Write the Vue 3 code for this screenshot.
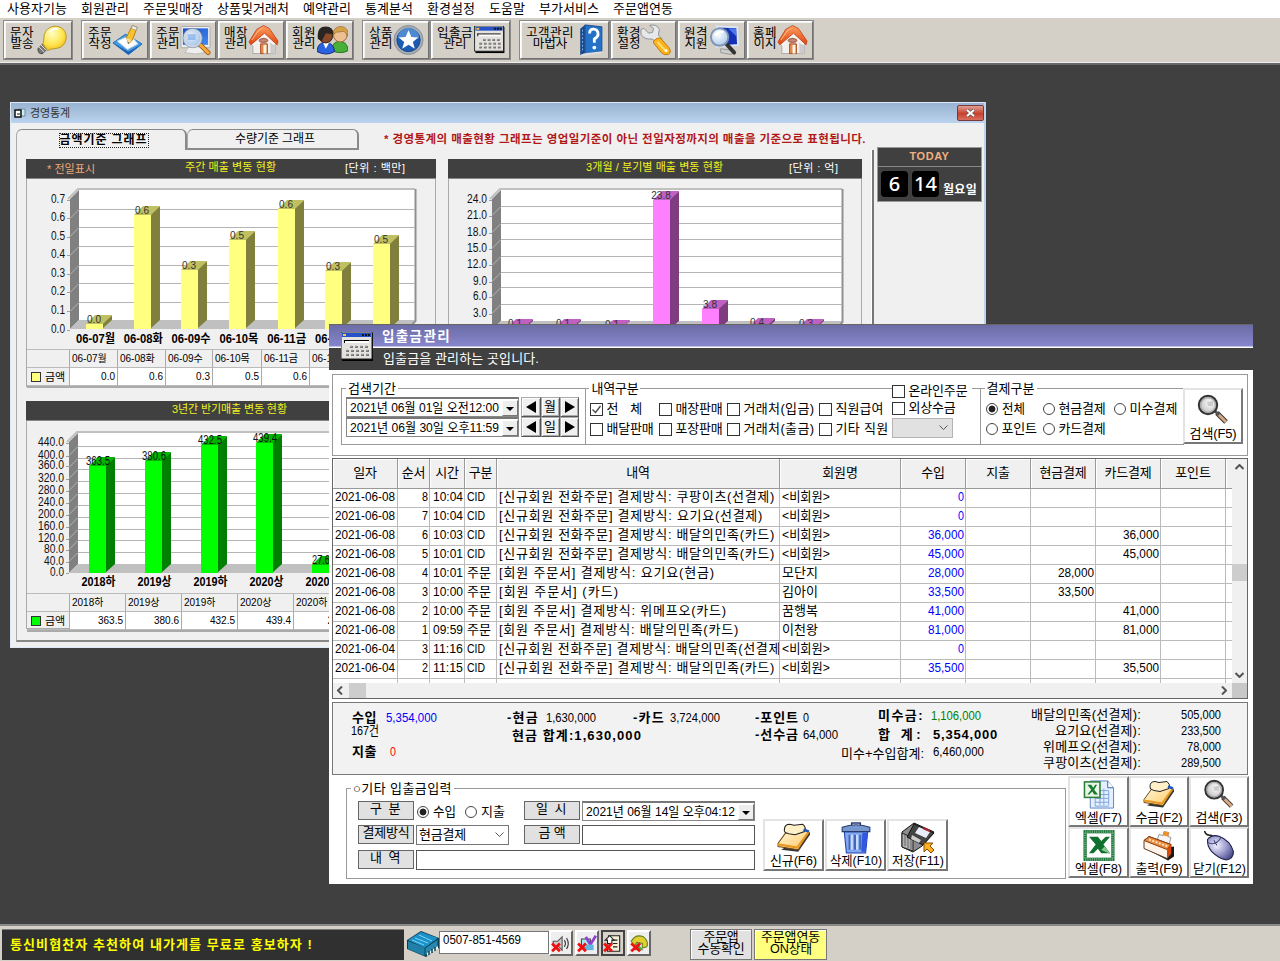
<script setup>
const gridWidth = (s) => [...s].reduce((n, c) => n + (c.charCodeAt(0) > 255 ? 12 : 6), 0)

// Fits a line of text to a width (half/full-width cells by default):
// condensed when it is too long, tracked out when it is too short.
const vFit = {
  mounted(el, { value }) {
    const text = el.textContent
    const target = value || gridWidth(text)
    const natural = el.getBoundingClientRect().width
    if (target / natural < 0.97) {
      el.style.transformOrigin = '0 50%'
      el.style.transform = `scaleX(${target / natural})`
      el.style.marginRight = target - natural + 'px'
    } else {
      el.style.letterSpacing = (target - natural) / [...text].length + 'px'
    }
  }
}

const menus = [
  ['사용자기능', 60], ['회원관리', 48], ['주문및매장', 60], ['상품및거래처', 72], ['예약관리', 48],
  ['통계분석', 48], ['환경설정', 48], ['도움말', 36], ['부가서비스', 60], ['주문앱연동', 60]
]

const toolGroups = [
  [{ a: '문자', b: '발송', w: 70, i: 'bulb' }],
  [
    { a: '주문', b: '작성', w: 68, i: 'note' }, { a: '주문', b: '관리', w: 68, i: 'monitor' },
    { a: '매장', b: '관리', w: 68, i: 'house' }, { a: '회원', b: '관리', w: 69, i: 'people' }
  ],
  [{ a: '상품', b: '관리', w: 68, i: 'star' }, { a: '입출금', b: '관리', w: 81, i: 'calc' }],
  [
    { a: '고객관리', b: '마법사', w: 91, i: 'book' }, { a: '환경', b: '설정', w: 67, i: 'wrench' },
    { a: '원격', b: '지원', w: 69, i: 'remote' }, { a: '홈페', b: '이지', w: 68, i: 'house' }
  ]
]

const charts = [
  {
    id: 'week', title: '주간 매출 변동 현황', tw: 91, tx: 159, unit: '[단위 : 백만]', uw: 60, ux: 319, note: '* 전일표시',
    x: 26, y: 180, w: 410, h: 170, left: 70, right: 415, top: 191, floor: 321, labelX: 65,
    front: '#ffff80', side: '#80803c', cap: '#c0c060', bottom: 330,
    lines: [210, 228, 247, 266, 284, 303],
    ticks: [['0.7', 200], ['0.6', 218], ['0.5', 237], ['0.4', 255], ['0.3', 274], ['0.2', 292], ['0.1', 311], ['0.0', 330]],
    bars: [[86, 325, '0.0'], [134, 216, '0.6'], [181, 271, '0.3'], [229, 241, '0.5'], [278, 210, '0.6'], [325, 272, '0.3'], [373, 245, '0.5']],
    names: ['06-07월', '06-08화', '06-09수', '06-10목', '06-11금', '06-12토'], nw: 39, step: 47.8, ny: 344,
    cols: '43px 48px 48px 47px 49px 48px 48px 1fr', values: ['0.0', '0.6', '0.3', '0.5', '0.6', '0.3'], small: true
  },
  {
    id: 'quarter', title: '3개월 / 분기별 매출 변동 현황', tw: 137, tx: 138, unit: '[단위 : 억]', uw: 49, ux: 341, note: '',
    x: 448, y: 180, w: 414, h: 170, left: 492, right: 842, top: 191, floor: 322, labelX: 487,
    front: '#ff80ff', side: '#803c80', cap: '#c060c0', bottom: 331,
    lines: [207, 224, 240, 257, 273, 288, 305],
    ticks: [['24.0', 200], ['21.0', 216], ['18.0', 233], ['15.0', 249], ['12.0', 265], ['9.0', 282], ['6.0', 297], ['3.0', 314]],
    bars: [[507, 329, '0.1'], [555, 329, '0.1'], [604, 330, '0.1'], [653, 201, '23.8'], [702, 310, '3.8'], [749, 328, '0.4'], [798, 329, '0.3']],
    names: [], values: [], small: true
  },
  {
    id: 'half', title: '3년간 반기매출 변동 현황', tw: 115, tx: 146, unit: '', note: '',
    x: 26, y: 420, w: 410, h: 172, left: 69, right: 415, top: 432, floor: 563, labelX: 64,
    front: '#00ff00', side: '#008000', cap: '#00b400', bottom: 572,
    lines: [445, 457, 468, 480, 492, 504, 516, 528, 539, 551],
    ticks: [['440.0', 441], ['400.0', 454], ['360.0', 464], ['320.0', 477], ['280.0', 489], ['240.0', 501], ['200.0', 513], ['160.0', 525], ['120.0', 537], ['80.0', 548], ['40.0', 560], ['0.0', 571]],
    bars: [[89, 465, '363.5'], [145, 460, '380.6'], [201, 444, '432.5'], [256, 442, '439.4'], [312, 564, '27.6']],
    names: ['2018하', '2019상', '2019하', '2020상', '2020하'], nw: 34, step: 56, ny: 585,
    cols: '43px 56px 56px 56px 56px 56px 1fr', values: ['363.5', '380.6', '432.5', '439.4', '27.6'], small: false
  }
]

const methods = [
  [['전   체', true, 36], ['매장판매', false, 47], ['거래처(입금)', false, 71], ['직원급여', false, 48]],
  [['배달판매', false, 47], ['포장판매', false, 47], ['거래처(출금)', false, 71], ['기타 직원', false, 53]]
]

const heads = ['일자', '순서', '시간', '구분', '내역', '회원명', '수입', '지출', '현금결제', '카드결제', '포인트', '']
const order = '[신규회원 전화주문] 결제방식: '
const rows = [
  ['2021-06-08', '8', '10:04', 'CID', order + '쿠팡이츠(선결제)', '<비회원>', '0', '', '', '', '', ''],
  ['2021-06-08', '7', '10:04', 'CID', order + '요기요(선결제)', '<비회원>', '0', '', '', '', '', ''],
  ['2021-06-08', '6', '10:03', 'CID', order + '배달의민족(카드)', '<비회원>', '36,000', '', '', '36,000', '', ''],
  ['2021-06-08', '5', '10:01', 'CID', order + '배달의민족(카드)', '<비회원>', '45,000', '', '', '45,000', '', ''],
  ['2021-06-08', '4', '10:01', '주문', '[회원 주문서] 결제방식: 요기요(현금)', '모단지', '28,000', '', '28,000', '', '', ''],
  ['2021-06-08', '3', '10:00', '주문', '[회원 주문서] (카드)', '김아이', '33,500', '', '33,500', '', '', ''],
  ['2021-06-08', '2', '10:00', '주문', '[회원 주문서] 결제방식: 위메프오(카드)', '꿈행복', '41,000', '', '', '41,000', '', ''],
  ['2021-06-08', '1', '09:59', '주문', '[회원 주문서] 결제방식: 배달의민족(카드)', '이천왕', '81,000', '', '', '81,000', '', ''],
  ['2021-06-04', '3', '11:16', 'CID', order + '배달의민족(선결제', '<비회원>', '0', '', '', '', '', ''],
  ['2021-06-04', '2', '11:15', 'CID', order + '배달의민족(카드)', '<비회원>', '35,500', '', '', '35,500', '', ''],
  ['', '', '', '', '', '', '', '', '', '', '', '']
]

const apps = [
  ['배달의민족(선결제):', '505,000'], ['요기요(선결제):', '233,500'],
  ['위메프오(선결제):', '78,000'], ['쿠팡이츠(선결제):', '289,500']
]

const entryButtons = [['신규(F6)', 'pad', 47], ['삭제(F10)', 'trash', 52], ['저장(F11)', 'save', 52]]
const mainButtons = [
  ['엑셀(F7)', 'sheet', 47], ['수금(F2)', 'pad', 47], ['검색(F3)', 'lens', 47],
  ['엑셀(F8)', 'excel', 47], ['출력(F9)', 'printer', 47], ['닫기(F12)', 'mouse', 53]
]
const trayIcons = ['sound', 'screen', 'memo', 'phone']
</script>

<template>
  <div class="app">
    <svg class="defs" width="0" height="0">
      <defs>
        <radialGradient id="gBulb" cx=".4" cy=".3" r=".8"><stop offset="0" stop-color="#ffffc0" /><stop offset=".6" stop-color="#ffe34a" /><stop offset="1" stop-color="#e8a810" /></radialGradient>
        <linearGradient id="gRoof" x1="0" y1="0" x2="0" y2="1"><stop offset="0" stop-color="#ffa060" /><stop offset="1" stop-color="#e04410" /></linearGradient>
        <linearGradient id="gScreen" x1="0" y1="0" x2="1" y2="1"><stop offset="0" stop-color="#1a4cc8" /><stop offset="1" stop-color="#3f8cf0" /></linearGradient>
        <radialGradient id="gLens" cx=".4" cy=".35" r=".7"><stop offset="0" stop-color="#fff" /><stop offset="1" stop-color="#a8c8e8" /></radialGradient>
        <radialGradient id="gGrey" cx=".6" cy=".4" r=".7"><stop offset="0" stop-color="#fff" /><stop offset="1" stop-color="#b4b4b8" /></radialGradient>
        <linearGradient id="gPad" x1="0" y1="0" x2="1" y2="1"><stop offset="0" stop-color="#fff8dc" /><stop offset="1" stop-color="#ffc660" /></linearGradient>
        <radialGradient id="gMouse" cx=".35" cy=".4" r=".8"><stop offset="0" stop-color="#f4f4ff" /><stop offset=".5" stop-color="#9898cc" /><stop offset="1" stop-color="#383878" /></radialGradient>
      </defs>
      <symbol id="bulb" viewBox="0 0 32 32">
        <path d="M2 25l5-5 5 5-5 5q-5 1-5-5z" fill="#777" stroke="#444" /><path d="M3 23l6 6M5 21l6 6" stroke="#ddd" />
        <path d="M7 20C9 16 7 12 10 7 14 1 23 0 28 5s4 14-2 18c-5 3-10 1-14 4z" fill="url(#gBulb)" stroke="#b89828" />
        <path d="M14 8q4-5 9-3" stroke="#fff" stroke-width="2" fill="none" />
      </symbol>
      <symbol id="note" viewBox="0 0 32 32">
        <path d="M1 19L14 10l17 10-14 11z" fill="#3d9be4" stroke="#176fc0" /><path d="M1 19l16 9 14-8-14 11z" fill="#1f5fb0" />
        <path d="M5 17l14-6 8 9-11 6z" fill="#fff" stroke="#a4bed8" /><path d="M17 20L15 13 21 1l5 2-5 13z" fill="#f6c32c" stroke="#ba7c12" />
        <path d="M21 1l5 2-1 3-5-2z" fill="#eee" stroke="#888" stroke-width=".6" /><path d="M15 14l5 2-3 4z" fill="#ffe0a0" /><path d="M16 18l1.500.6V20z" fill="#222" />
      </symbol>
      <symbol id="monitor" viewBox="0 0 32 32">
        <rect x="1" y="2" width="30" height="22" rx="1" fill="#eee" stroke="#aaa" /><rect x="3" y="4" width="26" height="17" fill="url(#gScreen)" />
        <path d="M9 23h13l4 6q-10 3-21 0z" fill="#eee" stroke="#bbb" /><path d="M21 21l8 8" stroke="#9a5818" stroke-width="5" stroke-linecap="round" /><path d="M21 21l8 8" stroke="#f5a83c" stroke-width="3.200" stroke-linecap="round" />
        <circle cx="13" cy="14" r="9" fill="url(#gLens)" fill-opacity=".9" stroke="#cfd6de" stroke-width="2" /><circle cx="13" cy="14" r="10" fill="none" stroke="#7790b0" stroke-width=".7" /><path d="M8 10h8v6H8z" fill="#5b96e0" opacity=".5" />
      </symbol>
      <symbol id="house" viewBox="0 0 32 32">
        <path d="M5 15h23v15H5z" fill="#f1efee" stroke="#aaa" /><path d="M23 15h5v15h-5z" fill="#ccc" /><path d="M3 20L16 8l13 12-3 1-10-8L6 22z" fill="#f8f4f0" />
        <path d="M1 18L9 5 16 1 22 4 31 17l-1 4L17 9 3 21z" fill="url(#gRoof)" stroke="#bc3c10" stroke-width=".8" /><path d="M4 16L11 6l4-2" stroke="#ffc090" fill="none" />
        <path d="M13 20h7v10h-7z" fill="#e88a4c" stroke="#a84c20" /><path d="M16 21h3v9h-3z" fill="#fff4e4" /><ellipse cx="16" cy="16.500" rx="4.500" ry="2" fill="#c88870" stroke="#985040" />
      </symbol>
      <symbol id="people" viewBox="0 0 32 32">
        <path d="M15 27q0-9 9-10 8 2 8 10-7 4-17 0z" fill="#48b038" stroke="#20701c" /><circle cx="24" cy="11" r="7" fill="#edc094" stroke="#9b6830" /><path d="M16 11q1-9 9-9 8 1 7 10l-4-5-8 1z" fill="#d6a048" stroke="#8a6020" stroke-width=".6" />
        <path d="M0 28q0-9 9-10 9 2 9 10-8 5-18 0z" fill="#2a62e0" stroke="#153080" /><path d="M6 18l3 7 4-7z" fill="#fff" /><circle cx="9" cy="12" r="7" fill="#8a4a28" stroke="#351c10" /><path d="M1 15Q-1 2 9 2q8 0 8 8l-8-1-4 8z" fill="#2a2422" />
      </symbol>
      <symbol id="star" viewBox="0 0 32 32">
        <circle cx="16" cy="16" r="15" fill="#a7acb2" stroke="#8a8f96" /><circle cx="16" cy="16" r="12" fill="#1c5cb4" stroke="#174888" /><path d="M5 14a11 11 0 0 1 22 0q-11 4-22 0z" fill="#70a8e4" opacity=".6" />
        <path d="M16 6l3 7 7 .5-5.500 4.500 2 7-6.500-4-6.500 4 2-7L6 13.500l7-.5z" fill="#fff" />
      </symbol>
      <symbol id="calc" viewBox="0 0 32 30">
        <path d="M1 1h31v28H1z" fill="#000" /><path d="M0 0h31v27H0z" fill="#e4e2de" stroke="#222" /><path d="M1 1h29v4H1z" fill="#2552c8" /><path d="M2 2h3v2H2z" fill="#ffc830" /><path d="M21 2h2v2h-2zM24 2h2v2h-2zM27 2h2v2h-2z" fill="#111" />
        <path d="M3 8h25v3H3z" fill="#fff" /><path d="M3 8.500h25M3.500 8v3" stroke="#000" />
        <path d="M9 15h20M5 19h24M5 23h24" stroke="#777" stroke-width="2" stroke-dasharray="3 2" /><path d="M9 14h20M5 18h24M5 22h24" stroke="#bbb" stroke-dasharray="2 3" />
      </symbol>
      <symbol id="book" viewBox="0 0 26 34">
        <path d="M1 5l5-4v30l-5 2z" fill="#1a4888" /><path d="M6 1l18 2v26L6 32z" fill="#2472c8" stroke="#174a90" /><path d="M1 33l5-2 18-2v2L5 34z" fill="#ddd" /><path d="M3.500 6v22" stroke="#8ac0f0" stroke-dasharray="2 2" />
        <path d="M11 10q0-5 4.500-4.500T20 11q0 3-4 5v4" stroke="#fff" stroke-width="3" fill="none" /><circle cx="16" cy="25" r="2" fill="#fff" />
      </symbol>
      <symbol id="wrench" viewBox="0 0 32 32">
        <path d="M1 5l3-1 5 5 4-1 1-4-4-3q7-2 10 4l-1 6 4 4-5 5-5-5q-9 1-12-5z" fill="#e6e8ea" stroke="#8c9094" /><path d="M14 17q4-4 7-3l9 10q3 5-1 7-4 1-7-2l-8-10z" fill="#fbb41c" stroke="#c07808" /><path d="M18 18l9 10" stroke="#ffe078" stroke-width="2" /><circle cx="27" cy="27" r="1.500" fill="#fff" />
      </symbol>
      <symbol id="remote" viewBox="0 0 32 32">
        <path d="M8 2l21 1 1 18-22 2z" fill="#1430b4" stroke="#dce6f4" stroke-width="2" /><path d="M20 4h8v8z" fill="#4c78ea" /><path d="M12 25l14 2-3 4-11-2z" fill="#ccc" stroke="#999" />
        <path d="M17 19l9 10" stroke="#333" stroke-width="4" stroke-linecap="round" /><circle cx="11" cy="13" r="9" fill="url(#gLens)" stroke="#7e94b4" stroke-width="2" /><path d="M6 11q4-5 9-3" stroke="#fff" stroke-width="2" fill="none" />
      </symbol>
      <symbol id="lens" viewBox="0 0 32 32">
        <path d="M20 19l9 9" stroke="#333" stroke-width="5" /><path d="M21 20l8 8" stroke="#d8a880" stroke-width="3" /><path d="M18 17l4 4" stroke="#555" stroke-width="3" />
        <circle cx="11" cy="11" r="9" fill="url(#gGrey)" stroke="#333" stroke-width="2.400" /><circle cx="11" cy="11" r="7.500" fill="none" stroke="#aaa" stroke-width="1.500" /><path d="M10 8l6-1v5h-5z" fill="#ccc" />
      </symbol>
      <symbol id="pad" viewBox="0 0 32 30">
        <path d="M4 26l16 2L31 12v-3z" fill="#333" /><path d="M1 20L9 9l20-1 1 2-10 16-19-3z" fill="url(#gPad)" stroke="#6b4a18" /><path d="M1 21l18 3L30 9" stroke="#e89820" stroke-width="2" fill="none" />
        <path d="M7 7q0-5 5-5l4 1 8-1q4 3 2 7l-9 3-6-1q-5-1-4-4z" fill="#fff0c8" stroke="#222" /><path d="M25 7l5 2" stroke="#2058c0" stroke-width="2.500" />
      </symbol>
      <symbol id="trash" viewBox="0 0 28 30">
        <path d="M3 9h22l-2 20H5z" fill="#82a8f4" stroke="#1c40a8" /><path d="M20 10h5l-2 18h-4z" fill="#3058e4" /><path d="M8 12v14M13 12v14M18 12v14" stroke="#4468b8" stroke-width="2" /><path d="M10 12v14M15 12v14" stroke="#c8dcff" stroke-width="2" />
        <path d="M1 5q13-5 26 0v4H1z" fill="#7898d0" stroke="#283c70" /><path d="M10 3V1h8v2" fill="none" stroke="#283c70" stroke-width="1.500" />
      </symbol>
      <symbol id="save" viewBox="0 0 34 32">
        <path d="M1 10L13 1l20 9-12 14-9 6-11-5z" fill="#8c8c90" stroke="#111" /><path d="M1 11l11 5v13L1 25z" fill="#b0b0b2" stroke="#222" /><path d="M4 13v11M7 14v12M10 16v11" stroke="#666" />
        <path d="M13 2l20 9-11 12-16-8z" fill="#444" stroke="#111" /><path d="M18 5l11 5-4 6-11-5z" fill="#e8edf8" /><path d="M22 6l7 3" stroke="#b02030" stroke-width="2" /><path d="M11 13l9 5-2 3-8-4z" fill="#ccc" />
        <path d="M23 30v-9h9l-3 3 4 4-3 3-4-4z" fill="#ffb020" stroke="#8c4800" />
      </symbol>
      <symbol id="sheet" viewBox="0 0 32 32">
        <path d="M7 2h18l6 7v21H7z" fill="#e4f0ff" stroke="#5f86c4" /><path d="M25 2v7h6" fill="#fff" stroke="#3c62a8" /><path d="M17 12h9M17 16h9M12 20h14M12 24h14M17 10v17M21 10v17M26 12v15M12 20v8h14" stroke="#7ea4dc" fill="none" />
        <rect x="1" y="3" width="16" height="16" fill="#eaf5e8" stroke="#2e7d38" stroke-width="1.600" /><path d="M4 6h4l2 3 2-3h2l-3 5 4 5h-4l-2-3-3 3H4l4-5z" fill="#187c30" />
      </symbol>
      <symbol id="excel" viewBox="0 0 28 28">
        <rect x="1.500" y="1.500" width="25" height="25" fill="#fff" stroke="#187838" stroke-width="3" /><rect x="1.500" y="1.500" width="25" height="25" fill="none" stroke="#70a880" stroke-width="3" stroke-dasharray="1 1" />
        <path d="M5 6h8l3 4 4-4h4l-6 7 6 8h-8l-3-4-4 4H5l6-8z" fill="#107030" /><path d="M16 18l7 3h1l-5-6z" fill="#88c890" />
      </symbol>
      <symbol id="printer" viewBox="0 0 32 30">
        <path d="M6 20l19 10 6-4V16z" fill="#181818" /><path d="M14 10l2-6 4 1 1-4 5 1-1 4 3 1-2 7z" fill="#f4f4f4" stroke="#999" /><path d="M21 1l5 1-1 4-5-1z" fill="#f09020" /><path d="M1 10l5-4 22 8v9l-4 5L1 18z" fill="#fff2e8" stroke="#58402c" />
        <path d="M1 10l5-4 22 8-4 5z" fill="#e88c40" stroke="#903c10" /><path d="M6 9l19 7" stroke="#ffe0c0" stroke-width="2" stroke-dasharray="2 1.500" /><path d="M24 19l4-5v9l-4 5z" fill="#d84808" />
      </symbol>
      <symbol id="mouse" viewBox="0 0 30 30">
        <path d="M1 1q1 4 5 4t4 5" stroke="#222" stroke-width="1.500" fill="none" /><path d="M4 9q4-5 11-3 11 4 14 15 0 7-7 8-7-1-14-8-5-6-4-12z" fill="url(#gMouse)" stroke="#1c1c48" /><path d="M4 12q8 4 13-5M10 10l3 5" stroke="#44447c" fill="none" />
      </symbol>
      <symbol id="hall" viewBox="0 0 32 26">
        <path d="M0 9L14 0l18 7v10L19 26 0 18z" fill="#103848" /><path d="M1 9L14 1l17 6-13 10z" fill="#1c90c8" /><path d="M5 9l12 5M8 7l13 5M12 4l13 6" stroke="#7cd8f8" /><path d="M1 10l17 7v8L1 18z" fill="#2080a8" /><path d="M18 17l13-9v8l-13 9z" fill="#2888b0" stroke="#104050" /><path d="M20 22l11-7v3l-11 7z" fill="#e8f4f8" /><path d="M22 20v4M25 18v4M28 16v4" stroke="#104050" stroke-width="1.500" />
      </symbol>
      <symbol id="sound" viewBox="0 0 18 18"><path d="M2 7h4l4-4v12l-4-4H2z" fill="#ccc" stroke="#555" /><path d="M12 6q2 3 0 6M14 4q3 5 0 10" stroke="#333" fill="none" /><path d="M1 9l7 7M8 9l-7 7" stroke="#f01010" stroke-width="2.500" /></symbol>
      <symbol id="screen" viewBox="0 0 18 18"><path d="M4 5h8v8H4z" fill="#a8e4f0" stroke="#444" /><path d="M8 3l4 7 5-8" stroke="#9040d0" stroke-width="2.500" fill="none" /><path d="M8 10h7v5H8z" fill="#60b8e0" /><path d="M1 9l7 7M8 9l-7 7" stroke="#f01010" stroke-width="2.500" /></symbol>
      <symbol id="memo" viewBox="0 0 18 18"><path d="M5 2h10v14H4z" fill="#f6f0d8" stroke="#222" /><path d="M8 6h5M9 9h4M9 12h4" stroke="#222" /><path d="M2 6l4-4 4 4H8v3H4V6z" fill="#fff" stroke="#222" /><path d="M1 9l7 7M8 9l-7 7" stroke="#f01010" stroke-width="2.500" /></symbol>
      <symbol id="phone" viewBox="0 0 18 18"><path d="M2 7q4-7 11-4 5 4 3 9l-4 1v-4L7 8l-2 3z" fill="#e0d030" stroke="#688020" /><path d="M7 8l6 7H5z" fill="#50a840" /><path d="M2 9l8 7M10 9l-8 7" stroke="#f01010" stroke-width="2.500" /></symbol>
    </svg>

    <nav class="menu"><span v-for="m in menus" :key="m[0]" v-fit="m[1]">{{ m[0] }}</span></nav>

    <div class="toolbar">
      <div v-for="(g, gi) in toolGroups" :key="gi" class="tool-group">
        <button v-for="t in g" :key="t.a + t.b" class="tool" :style="{ width: t.w + 'px' }">
          <span class="two"><span v-fit="t.a.length * 12">{{ t.a }}</span><span v-fit="t.b.length * 11.500">{{ t.b }}</span></span>
          <svg :class="['tool-icon', t.i]"><use :href="'#' + t.i" /></svg>
        </button>
      </div>
    </div>

    <main class="desk">
      <section class="win stats">
        <header class="stats-bar">
          <svg width="13" height="11" viewBox="0 0 13 11"><path d="M4 1h7v7H4z" fill="#c8f0f4" stroke="#789" /><path d="M1 2h6v7H1z" fill="#fff" stroke="#111" stroke-width="1.500" /><path d="M3 6h3" stroke="#111" /></svg>
          <span v-fit="40">경영통계</span>
          <button class="close"><svg width="9" height="8" viewBox="0 0 9 8"><path d="M1 1l7 6M8 1L1 7" stroke="#555" stroke-width="3.200" /><path d="M1 1l7 6M8 1L1 7" stroke="#fff" stroke-width="2" /></svg></button>
        </header>
        <div class="stats-body">
          <div class="stats-main">
            <div class="tabs">
              <div class="tab on"><b v-fit="88">금액기준 그래프</b></div>
              <div class="tab"><span v-fit="80">수량기준 그래프</span></div>
              <b v-fit="482" class="notice">* 경영통계의 매출현황 그래프는 영업일기준이 아닌 전일자정까지의 매출을 기준으로 표현됩니다.</b>
            </div>
            <div class="panel">
              <article v-for="c in charts" :key="c.id" class="chart">
                <header class="chart-head">
                  <svg width="100%" height="19">
                    <text v-if="c.note" x="21" y="14" textLength="48" class="note">{{ c.note }}</text>
                    <text :x="c.tx" y="12" :textLength="c.tw" class="ttl">{{ c.title }}</text>
                    <text v-if="c.unit" :x="c.ux" y="13" :textLength="c.uw" class="unit">{{ c.unit }}</text>
                  </svg>
                </header>
                <svg class="plot" :width="c.w - 2" :height="c.h" :viewBox="`${c.x + 1} ${c.y} ${c.w - 2} ${c.h}`">
                  <path :d="`M${c.left} ${c.top + 9}l9-9V${c.floor}l-9 9z`" fill="#808080" />
                  <path :d="`M${c.left + 9} ${c.top}H${c.right}V${c.floor}H${c.left + 9}z`" fill="#fff" />
                  <path :d="`M${c.left - 2} ${c.top + 9}l10-10H${c.right}`" stroke="#c0c0c0" stroke-width="2" fill="none" />
                  <path :d="`M${c.left} ${c.floor + 9}l9-9H${c.right}l-9 9z`" fill="#c0c0c0" />
                  <path :d="`M${c.right + .5} ${c.top - 1}V${c.floor + 1}l-9 9`" stroke="#909090" stroke-width="2" fill="none" />
                  <path v-for="l in c.lines" :key="l" :d="`M${c.left} ${l + 9.500}l9-9H${c.right}`" stroke="#b4b4b4" fill="none" />
                  <path v-for="t in c.ticks" :key="t[0]" :d="`M${c.left - 3} ${t[1] + 1.500}h3`" stroke="#a0a0a0" />
                  <text v-for="t in c.ticks" :key="'t' + t[0]" :x="c.labelX" :y="t[1] + 4" text-anchor="end" class="tick" :textLength="t[0].length * 6 - 4" lengthAdjust="spacingAndGlyphs">{{ t[0] }}</text>
                  <g v-for="(b, bi) in c.bars" :key="bi">
                    <path :d="`M${b[0] + 16} ${b[1]}l10-9V${c.floor}l-10 9z`" :fill="c.side" />
                    <path :d="`M${b[0]} ${b[1]}l9-9h17l-9 9z`" :fill="c.cap" />
                    <rect :x="b[0]" :y="b[1]" width="17" :height="c.bottom - b[1]" :fill="c.front" />
                    <text :x="b[0] + (c.small ? 8 : 9)" :y="b[1] - 1" text-anchor="middle" :class="c.small ? 'val' : 'val big'" :textLength="c.small ? null : b[2].length * 6 - 6" lengthAdjust="spacingAndGlyphs">{{ b[2] }}</text>
                  </g>
                  <text v-for="(n, ni) in c.names" :key="n" :x="c.left + 25.500 + c.step * ni + (c.small ? 0 : 4)" :y="c.ny" text-anchor="middle" class="name" :textLength="c.nw" lengthAdjust="spacingAndGlyphs">{{ n }}</text>
                </svg>
                <div v-if="c.names.length" class="data" :style="{ gridTemplateColumns: c.cols }">
                  <span></span><span v-for="n in c.names" :key="n" class="dn">{{ n }}</span><span></span>
                  <span class="key"><i :style="{ background: c.front }"></i>금액</span><span v-for="(v, vi) in c.values" :key="vi" class="dv">{{ v }}</span><span class="dv"></span>
                </div>
              </article>
            </div>
          </div>
          <aside class="today">
            <div class="today-head"><span v-fit="40">TODAY</span></div>
            <div class="today-date"><span class="num">6</span><span class="num">14</span><b v-fit="34">월요일</b></div>
          </aside>
        </div>
      </section>

      <section class="win cash">
        <header class="cash-bar">
          <svg class="cash-icon" width="32" height="30"><use href="#calc" /></svg>
          <h1><span v-fit="69">입출금관리</span></h1>
          <p><span v-fit="156">입출금을 관리하는 곳입니다.</span></p>
        </header>

        <div class="filter">
          <fieldset class="f-date">
            <legend><span v-fit="48">검색기간</span></legend>
            <div class="date-row">
              <div class="date"><span v-fit="149">2021년 06월 01일 오전12:00</span><i class="drop"></i></div>
              <button class="sq"><i class="tri left"></i></button><button class="sq">월</button><button class="sq"><i class="tri right"></i></button>
            </div>
            <div class="date-row">
              <div class="date"><span v-fit="149">2021년 06월 30일 오후11:59</span><i class="drop"></i></div>
              <button class="sq"><i class="tri left"></i></button><button class="sq">일</button><button class="sq"><i class="tri right"></i></button>
            </div>
          </fieldset>
          <fieldset class="f-kind">
            <legend><span v-fit="47">내역구분</span></legend>
            <div class="kind-row">
              <div class="kinds">
                <template v-for="(r, ri) in methods" :key="ri">
                  <label v-for="m in r" :key="m[0]"><i class="box"><svg v-if="m[1]" width="11" height="11"><path d="M1.500 5.500l3 3 5-6.500" stroke="#444" stroke-width="1.300" fill="none" /></svg></i><span v-fit="m[2]">{{ m[0] }}</span></label>
                </template>
              </div>
              <div class="extra">
                <label><i class="box"></i><span v-fit="59">온라인주문</span></label>
                <label><i class="box"></i><span v-fit="47">외상수금</span></label>
                <div class="combo off"><svg width="9" height="6"><path d="M.5.5l4 4 4-4" stroke="#555" fill="none" /></svg></div>
              </div>
            </div>
          </fieldset>
          <fieldset class="f-pay">
            <legend><span v-fit="48">결제구분</span></legend>
            <div class="pays">
              <label><i class="radio on"></i><span v-fit="23">전체</span></label>
              <label><i class="radio"></i><span v-fit="47">현금결제</span></label>
              <label><i class="radio"></i><span v-fit="48">미수결제</span></label>
              <label><i class="radio"></i><span v-fit="35">포인트</span></label>
              <label><i class="radio"></i><span v-fit="47">카드결제</span></label>
            </div>
          </fieldset>
          <button class="push find"><svg width="32" height="32"><use href="#lens" /></svg><span v-fit="47">검색(F5)</span></button>
        </div>

        <div class="sheet">
          <div class="sheet-view">
            <div class="row head"><span v-for="(h, i) in heads" :key="i">{{ h }}</span></div>
            <div v-for="(r, ri) in rows" :key="ri" class="row">
              <span v-for="(v, i) in r" :key="i" :class="'c' + i"><em v-if="v" v-fit>{{ v }}</em></span>
            </div>
          </div>
          <div class="vscroll"><svg width="9" height="6"><path d="M.5 5l4-4 4 4" /></svg><i></i><svg width="9" height="6"><path d="M.5 1l4 4 4-4" /></svg></div>
          <div class="hscroll"><svg width="6" height="9"><path d="M5 .5l-4 4 4 4" /></svg><i></i><svg width="6" height="9"><path d="M1 .5l4 4-4 4" /></svg></div>
          <div class="corner"></div>
        </div>

        <div class="sum">
          <div class="s1">
            <div class="ln"><b v-fit="25">수입</b><span v-fit="51" class="blue">5,354,000</span></div>
            <div class="ln l2"><span v-fit="28">167건</span></div>
            <div class="ln l3"><b v-fit="25">지출</b><span v-fit="6" class="red">0</span></div>
          </div>
          <div class="s2">
            <div class="ln"><b v-fit="32">-현금</b><span v-fit="50">1,630,000</span></div>
            <div class="ln tot"><b v-fit="130">현금 합계:1,630,000</b></div>
          </div>
          <div class="s3"><div class="ln"><b v-fit="32">-카드</b><span v-fit="50">3,724,000</span></div></div>
          <div class="s4">
            <div class="ln"><b v-fit="44">-포인트</b><span v-fit="6">0</span></div>
            <div class="ln"><b v-fit="44">-선수금</b><span v-fit="35">64,000</span></div>
          </div>
          <div class="s5">
            <div class="ln"><div class="lab"><b v-fit="46">미수금:</b></div><span v-fit="50" class="green">1,106,000</span></div>
            <div class="ln"><div class="lab"><b v-fit="46">합   계:</b></div><b v-fit="65" class="grand">5,354,000</b></div>
            <div class="ln"><div class="lab"><span v-fit="83">미수+수입합계:</span></div><span v-fit="51" class="last">6,460,000</span></div>
          </div>
          <div class="s6"><div v-for="a in apps" :key="a[0]" class="ln"><span v-fit="a[0].length * 12 - 22">{{ a[0] }}</span><div class="amount"><span v-fit="a[1].length * 6 - 2">{{ a[1] }}</span></div></div></div>
        </div>

        <div class="entry">
          <fieldset class="form">
            <legend><span v-fit="99">○기타 입출금입력</span></legend>
            <div class="form-in">
              <div class="fields">
                <div class="cap"><span v-fit="32">구  분</span></div>
                <div class="radios"><label><i class="radio on"></i><span v-fit="23">수입</span></label><label><i class="radio"></i><span v-fit="24">지출</span></label></div>
                <div class="cap"><span v-fit="32">일  시</span></div>
                <div class="date"><span v-fit="149">2021년 06월 14일 오후04:12</span><i class="drop"></i></div>
                <div class="cap"><span v-fit="47">결제방식</span></div>
                <div class="combo"><span v-fit="47">현금결제</span><svg width="9" height="6"><path d="M.5.5l4 4 4-4" stroke="#555" fill="none" /></svg></div>
                <div class="cap"><span v-fit="27">금 액</span></div>
                <div class="field"></div>
                <div class="cap"><span v-fit="32">내  역</span></div>
                <div class="field wide"></div>
              </div>
              <div class="entry-buttons"><button v-for="b in entryButtons" :key="b[0]" class="push"><svg width="34" height="32"><use :href="'#' + b[1]" /></svg><span v-fit="b[2]">{{ b[0] }}</span></button></div>
            </div>
          </fieldset>
          <div class="actions"><button v-for="b in mainButtons" :key="b[0]" class="push"><svg width="32" height="31"><use :href="'#' + b[1]" /></svg><span v-fit="b[2]">{{ b[0] }}</span></button></div>
        </div>
      </section>
    </main>

    <footer class="status">
      <div class="ad"><b v-fit="303">통신비협찬자 추천하여 내가게를 무료로 홍보하자 !</b></div>
      <svg class="hall" width="32" height="26"><use href="#hall" /></svg>
      <div class="tel"><span v-fit="78">0507-851-4569</span></div>
      <div class="tray"><button v-for="t in trayIcons" :key="t"><svg width="20" height="21"><use :href="'#' + t" /></svg></button></div>
      <button class="link"><span v-fit="35">주문앱</span><span v-fit="47">수동확인</span></button>
      <button class="link lit"><span v-fit="59">주문앱연동</span><span v-fit="42">ON상태</span></button>
    </footer>
  </div>
</template>

<style>
body { background: #404040; overflow: hidden; }
</style>

<style scoped>
* { box-sizing: border-box; }
.app {
  display: flex; flex-direction: column; width: 1280px; height: 961px; overflow: hidden;
  background: #404040; color: #000; line-height: 14px; white-space: pre;
  font-family: "Liberation Sans", "Noto Sans CJK KR", sans-serif; font-size: 13px;
}
.app span, .app b, .app em { display: inline-block; font-style: normal; flex: none; }
.defs { position: absolute; }
button { font: inherit; color: inherit; margin: 0; padding: 0; border: 0; line-height: 12px; white-space: pre; }
i { flex: none; display: block; }

.menu { display: flex; gap: 14px; height: 18px; padding: 1px 7px; background: #fff; line-height: 16px; }
.toolbar { display: flex; gap: 8px; height: 47px; padding: 2px 3px; background: #d4d0c8; border-bottom: 2px solid #666; box-shadow: inset 0 -1px #eee; }
.tool-group { display: flex; }
.tool { display: flex; align-items: center; justify-content: space-between; height: 40px; padding: 0 4px 0 5px; background: #d4d0c8; border: 2px solid; border-color: #fff #707070 #707070 #fff; outline: 1px solid #8a8a8a; outline-offset: -1px; box-shadow: inset 1px 1px #f4f4f4; }
.app .two { display: flex; flex-direction: column; align-items: center; line-height: 11.500px; font-size: 12.500px; padding-bottom: 2px; }
.tool-icon { flex: none; width: 31px; height: 32px; margin-left: -1px; }
.tool-icon.book { width: 25px; }
.tool-icon.calc { height: 28px; }

.desk { position: relative; flex: 1; }
.win { position: absolute; display: flex; flex-direction: column; }
.stats { left: 10px; top: 37px; width: 976px; height: 546px; background: #f0f0f0; border: 1px solid #dce9f7; border-right: 2px solid #bcd4ee; font-size: 12px; }
.stats-bar { display: flex; align-items: center; height: 20px; padding: 0 0 0 3px; background: linear-gradient(#98b3d1, #bad3ee); color: #333; }
.stats-bar span { margin-left: 3px; font-size: 11px; }
.close { display: flex; align-items: center; justify-content: center; width: 27px; height: 16px; margin-left: auto; background: linear-gradient(#e0a098, #c8402c 55%, #d87060); border: 1px solid #7a3838; border-radius: 2px; }
.stats-body { display: flex; flex: 1; min-height: 0; }
.stats-main { width: 863px; padding: 6px 0 0 5px; }
.tabs { display: flex; height: 21px; }
.tab { display: flex; justify-content: center; align-items: center; width: 172px; padding-left: 5px; border: 2px solid #8a8a8a; border-left: 1px solid #aaa; border-top: 1px solid #8a8a8a; border-radius: 6px 6px 0 0; }
.tab.on { width: 171px; border-bottom: 0; background: #f0f0f0; z-index: 1; }
.tab.on b { outline: 1px dotted #222; line-height: 13px; }
.notice { margin-left: 25px; color: #b01818; line-height: 21px; font-size: 11.500px; }
.panel { display: grid; grid-template-columns: 410px 414px; column-gap: 12px; row-gap: 14px; height: 492px; padding: 9px; align-content: start; border: 1px solid #aaa; border-top: 0; border-right: 2px solid #777; border-bottom: 2px solid #888; box-shadow: inset -1px 0 #fff; }
.chart { height: 228px; border: 1px solid #aaa; border-top: 0; margin: 0; }
.chart-head { height: 20px; margin: 0 -1px; background: #404040; border-bottom: 1px solid #888; }
.note { fill: #f0a878; } .ttl { fill: #f0f020; } .unit { fill: #fff; }
.chart .ttl, .chart .note, .chart .unit { font-size: 11px; }
.plot { display: block; }
.chart .tick { font-size: 12px; fill: #111; }
.chart .val { font-size: 10px; fill: #333; }
.chart .val.big { font-size: 12px; fill: #111; }
.chart .name { font-weight: bold; font-size: 12px; }
.data { display: grid; grid-auto-rows: 18px; border-bottom: 2px solid #aaa; border-top: 1px solid #bbb; font-size: 10px; line-height: 18px; overflow: hidden; }
.data > span { border-right: 1px solid #aaa; border-bottom: 1px solid #bbb; padding: 0 2px; overflow: hidden; height: 18px; }
.data .dv { background: #fff; text-align: right; }
.app .data .key { display: flex; align-items: center; gap: 4px; font-size: 11px; padding-left: 4px; }
.key i { width: 10px; height: 10px; border: 1px solid #333; }
.today { width: 105px; height: 55px; margin: 24px 0 0 3px; background: #404040; border: 1px solid #999; }
.today-head { height: 19px; text-align: center; color: #f0b080; border-bottom: 1px solid #888; line-height: 17px; font: bold 11px/17px "Liberation Sans", sans-serif; }
.today-date { display: flex; align-items: flex-end; gap: 4px; padding: 4px 0 0 3px; color: #fff; }
.num { width: 27px; height: 26px; background: #000; border-radius: 4px; text-align: center; font: 500 20px/25px "Noto Sans", sans-serif; }
.today-date b { font-size: 12px; }

.cash { left: 329px; top: 259px; width: 924px; height: 560px; background: #fff; padding-left: 3px; }
.cash-bar { position: relative; height: 46px; margin-left: -3px; padding-left: 53px; background: linear-gradient(#666 1px, #6c6ca6 1px, #8585cc 22px, #fff 23px, #fff 24px, #404040 24px); color: #fff; }
.cash-icon { position: absolute; left: 12px; top: 8px; }
.cash-bar h1 { margin: 0; font-size: 13.500px; line-height: 26px; height: 24px; }
.cash-bar p { margin: 0 0 0 1px; line-height: 21px; }
.filter { display: flex; width: 916px; height: 82px; margin-top: 4px; padding: 7px 4px 0 8px; border: 1px solid #999; }
fieldset { min-width: 0; margin: 0; padding: 0; border: 1px solid #999; }
legend { height: 13px; line-height: 13px; padding: 0 2px; margin-left: 4px; }
.f-date { width: 246px; height: 63px; }
.f-kind { width: 396px; height: 63px; margin-left: -1px; }
.f-kind legend { margin-left: 3px; }
.f-pay { width: 205px; height: 63px; margin-left: -1px; }
.date-row { display: flex; height: 20px; padding-left: 4px; margin-top: 0; }
.date-row:nth-of-type(1) { margin-top: 2px; }
.date { display: flex; align-items: center; width: 173px; height: 20px; padding-left: 3px; border: 1px solid #888; border-top: 2px solid #777; background: #fff; line-height: 14px; }
.drop { display: flex; width: 16px; height: 16px; margin-left: auto; background: #eee; border: 1px solid; border-color: #fff #777 #777 #fff; }
.drop::after { content: ""; margin: 6px 0 0 3px; border: 4px solid transparent; border-top-color: #000; border-bottom: 0; height: 0; }
.sq { display: flex; align-items: center; justify-content: center; width: 19px; height: 20px; background: #f0f0f0; border: 1px solid; border-color: #aaa #555 #555 #aaa; box-shadow: inset 1px 1px #fff, inset -1px -1px #aaa; }
.sq:nth-child(3) { padding-right: 1px; }
.date + .sq { margin-left: 2px; width: 20px; }
.tri { border: 6px solid transparent; }
.tri.left { border-right: 10px solid #000; border-left: 0; }
.tri.right { border-left: 10px solid #000; border-right: 0; }
label { display: flex; align-items: center; gap: 3px; height: 14px; }
.box { width: 13px; height: 13px; border: 1px solid #333; background: #fff; }
.box svg { display: block; }
.kind-row { display: flex; padding-left: 4px; }
.kinds { display: grid; grid-template-columns: 69px 68px 92px 73px; grid-auto-rows: 20px; align-items: center; padding-top: 4px; }
.extra { display: flex; flex-direction: column; gap: 3px; width: 80px; height: 55px; margin-top: -11px; background: #fff; }
.combo { display: flex; align-items: center; justify-content: space-between; width: 93px; height: 20px; padding: 0 4px 0 2px; border: 1px solid #777; background: #fff; }
.combo.off { width: 61px; height: 20px; flex: none; justify-content: flex-end; background: #e1e1e1; border-color: #b4b4b4; }
.pays { display: grid; grid-template-columns: 57px 71px 70px; grid-auto-rows: 20px; padding: 4px 0 0 5px; align-items: center; }
.radio { width: 12px; height: 12px; border: 1px solid #444; border-radius: 50%; }
.radio.on { background: radial-gradient(#222 0 3px, #fff 3.800px); }
.pays label { gap: 4px; }
.push { display: flex; flex-direction: column; align-items: center; justify-content: space-between; background: #fff; border: 2px solid; border-color: #e4e4e4 #777 #777 #e4e4e4; line-height: 14px; }
.push svg { display: block; }
.find { width: 60px; height: 56px; margin: 6px 0 0 -1px; padding: 4px 0 1px; }

.sheet { display: grid; grid-template-columns: 899px 15px; grid-template-rows: 224px 15px; width: 916px; height: 241px; margin-top: 2px; border: 1px solid #666; }
.sheet-view { overflow: hidden; }
.row { display: grid; grid-template-columns: 65px 32px 35px 32px 283px 121px 65px 65px 65px 65px 65px 6px; height: 19px; }
.row > span { border-right: 1px solid #bbb; border-bottom: 1px solid #bbb; padding: 0 1px; line-height: 16px; overflow: hidden; }
.row > span:last-child { border-right: 0; }
.row.head { height: 30px; background: #f0f0f0; }
.row.head > span { text-align: center; line-height: 27px; border-color: #999; box-shadow: inset 1px 1px #fff; letter-spacing: -.2px; }
.row .c0, .row .c3, .row .c4, .row .c5 { padding-left: 2px; }
.row .c1, .row .c2, .row .c6, .row .c8, .row .c9 { text-align: right; }
.row .c6 { color: #00f; }
.vscroll, .hscroll { display: flex; align-items: center; background: #f0f0f0; }
.vscroll { flex-direction: column; padding: 5px 0; }
.vscroll i { width: 15px; height: 17px; margin: 94px 0 auto; background: #cdcdcd; }
.vscroll svg, .hscroll svg { flex: none; fill: none; stroke: #555; stroke-width: 2; }
.hscroll { padding: 0 5px 0 4px; }
.hscroll i { width: 17px; height: 15px; margin: 0 auto 0 6px; background: #cdcdcd; }
.corner { background: #c8c8c8; }

.sum { display: grid; grid-template-columns: 155px 126px 122px 84px 190px 1fr; width: 916px; height: 73px; margin-top: 3px; padding-left: 19px; background: #f2f2f2; border: 1px solid #777; }
.ln { display: flex; }
.s1 { padding-top: 8px; } .s1 .ln { gap: 9px; } .s1 .l2 { margin: -1px 0 0 -1px; } .s1 .l3 { margin-top: 7px; gap: 13px; }
.s2 { padding-top: 8px; } .s2 .ln { gap: 7px; } .s2 .tot { margin: 4px 0 0 5px; }
.s3 { padding-top: 8px; } .s3 .ln { gap: 5px; }
.s4 { padding-top: 8px; display: flex; flex-direction: column; gap: 3px; } .s4 .ln { gap: 4px; }
.s5 { padding-top: 6px; display: flex; flex-direction: column; gap: 5px; }
.lab { display: flex; justify-content: flex-end; width: 85px; margin-right: 7px; flex: none; }
.s5 .grand { margin-left: 2px; }
.s5 .last { margin-left: 2px; position: relative; top: -2px; }
.s6 { padding-top: 5px; } .s6 .ln { height: 16px; justify-content: flex-end; padding-right: 26px; }
.amount { display: flex; justify-content: flex-end; width: 80px; flex: none; }
.blue { color: #00f; } .red { color: #f00; } .green { color: #008000; }

.entry { display: flex; width: 917px; margin-top: 1px; padding-left: 14px; }
.form { width: 720px; height: 97px; margin-top: 6px; }
.form-in { display: flex; padding-left: 11px; }
.fields { display: grid; grid-template-columns: 56px 106px 56px 173px; grid-template-rows: 19px 20px 19px; row-gap: 5px; column-gap: 2px; padding-top: 6px; align-items: start; }
.fields .cap { display: flex; justify-content: center; height: 19px; background: #e1e1e1; border: 1px solid #666; line-height: 14px; }
.fields .date { height: 20px; }
.radios { display: flex; gap: 9px; padding-top: 4px; padding-left: 1px; }
.radios label { gap: 4px; }
.field { height: 20px; border: 1px solid #555; background: #fff; }
.field.wide { grid-column: span 3; }
.entry-buttons { display: flex; gap: 1px; margin: 24px 0 0 8px; }
.entry-buttons .push { width: 61px; height: 52px; padding: 1px 0; }
.actions { display: grid; grid-template-columns: 61px 60px 60px; grid-auto-rows: 51px; margin-left: 2px; height: 102px; }
.actions .push { padding: 1px 0 0; }

.status { display: flex; height: 37px; padding: 3px 0 0 2px; background: #d4d0c8; border-top: 2px solid #888; }
.ad { width: 402px; height: 31px; padding-left: 8px; background: #303030; border-top: 1px solid #777; color: #ff0; line-height: 30px; }
.hall { margin: 2px 0 0 3px; }
.tel { width: 110px; height: 23px; margin-top: 2px; padding-left: 3px; background: #fff; border: 1px solid #777; line-height: 15px; }
.tray { display: flex; gap: 2px; padding-top: 1px; }
.tray button { display: flex; align-items: center; justify-content: center; width: 24px; height: 26px; background: #eee; border: 2px solid; border-color: #fff #666 #666 #fff; }
.tray button:nth-child(3) { background: #d8d4cc; border-color: #444; }
.link { display: flex; flex-direction: column; align-items: center; width: 62px; height: 31px; margin-left: 39px; padding-top: 1px; background: #e1e1e1; border: 1px solid #777; box-shadow: inset 1px 1px #fff; line-height: 12px; }
.link.lit { width: 73px; margin-left: 2px; background: #ffff80; }
</style>
